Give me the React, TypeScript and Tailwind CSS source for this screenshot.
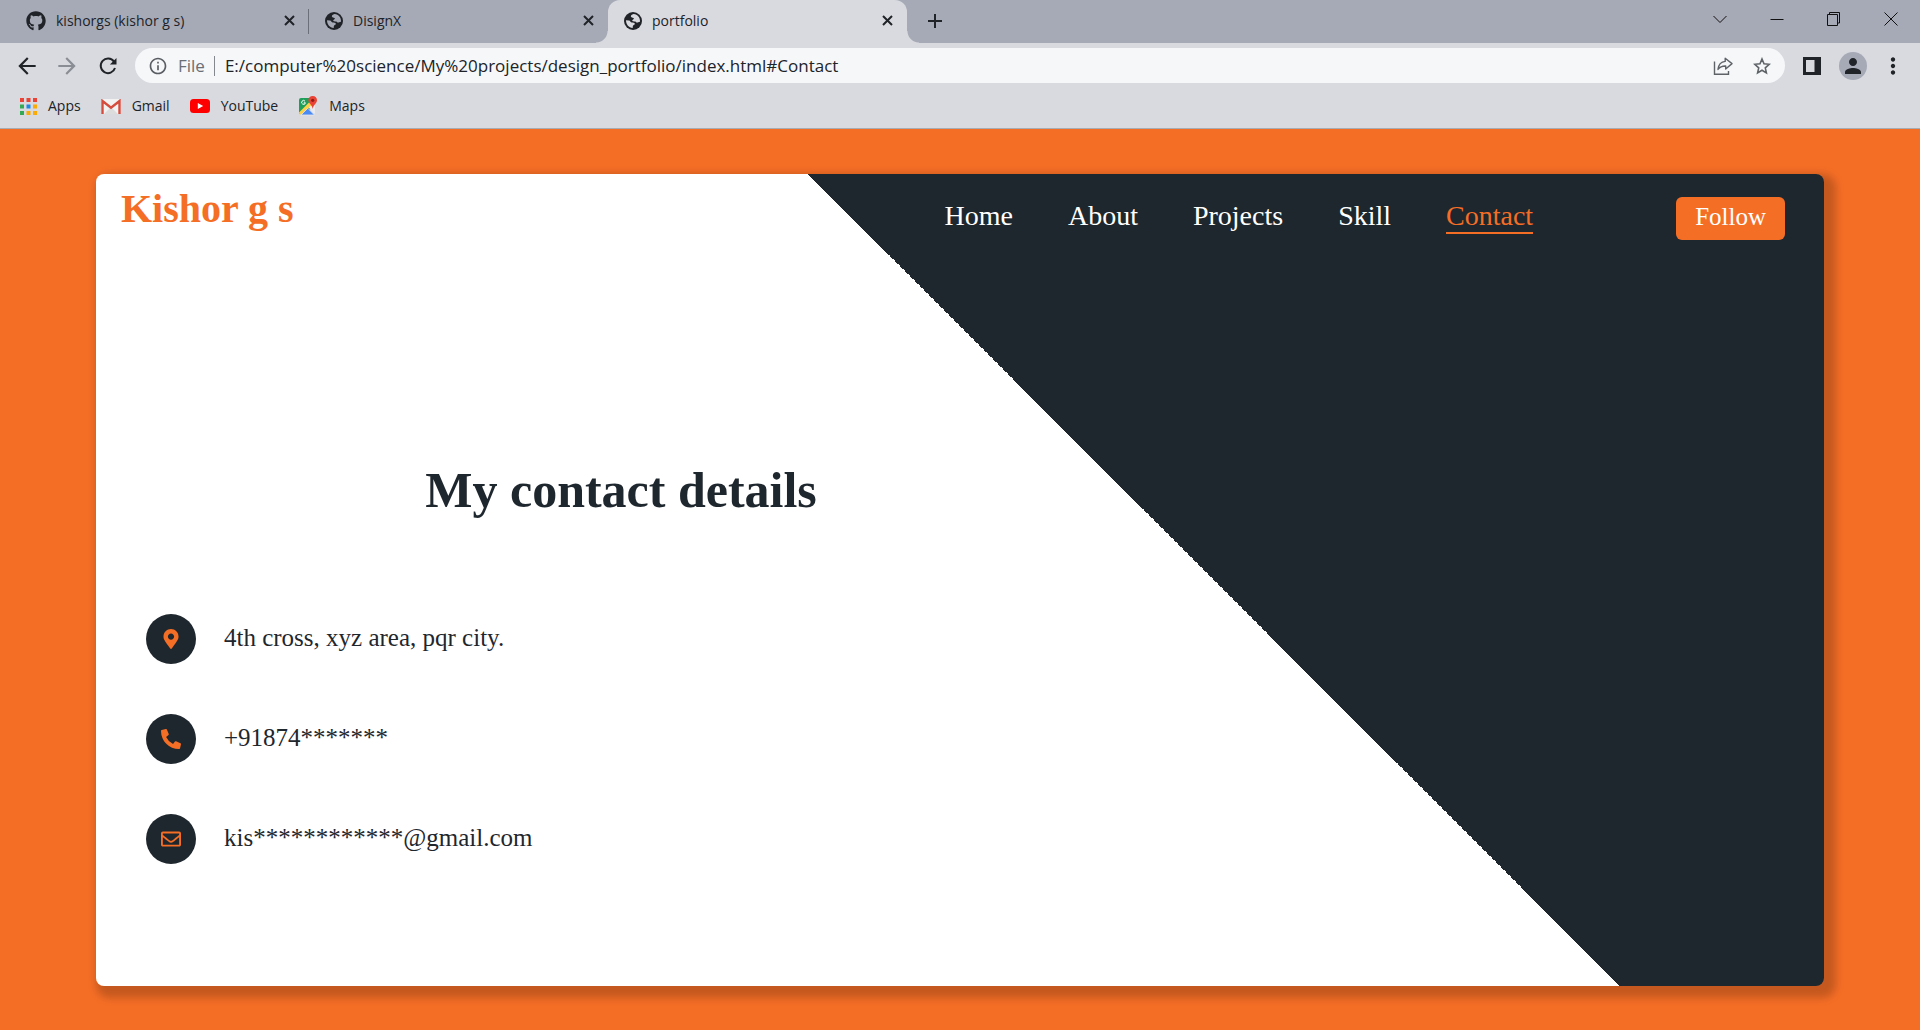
import React from "react";
import { FaGithub, FaMapMarkerAlt, FaPhoneAlt, FaRegEnvelope } from "react-icons/fa";
import {
  MdAdd,
  MdArrowBack,
  MdArrowForward,
  MdMoreVert,
  MdOutlineInfo,
  MdPerson,
} from "react-icons/md";

type TabProps = {
  title: string;
  icon: React.ReactNode;
  active?: boolean;
  divider?: boolean;
};

function Tab({ title, icon, active, divider }: TabProps) {
  return (
    <div
      className={
        active
          ? "relative flex w-[299px] items-center rounded-t-xl bg-[#d9dadf] pr-[14px] pb-[2px] pl-4"
          : "relative flex w-[299px] items-center pr-[14px] pb-[2px] pl-4"
      }
    >
      {active && (
        <>
          <span className="absolute bottom-0 -left-3 size-3 bg-[radial-gradient(circle_at_0_0,transparent_11px,#d9dadf_12px)]" />
          <span className="absolute -right-3 bottom-0 size-3 bg-[radial-gradient(circle_at_100%_0,transparent_11px,#d9dadf_12px)]" />
        </>
      )}
      <a href="#tab" className="flex grow items-center gap-[10px] text-sm text-[#202328]">
        {icon}
        {title}
      </a>
      <button aria-label={`Close ${title}`} className="text-[#202328]">
        <svg viewBox="0 0 11 11" className="size-[11px]" fill="none" stroke="currentColor" strokeWidth="2">
          <path d="m1 1 9 9m0-9-9 9" />
        </svg>
      </button>
      {divider && <span className="absolute top-[9px] right-0 h-[25px] w-px bg-[#6b6f78]" />}
    </div>
  );
}

function Globe({ land }: { land: string }) {
  return (
    <svg viewBox="0 0 18 18" className="size-[18px]">
      <circle cx="9" cy="9" r="9" fill="#202328" />
      <path
        d="M9.500 2C6.800 2.800 6.400 4 7.200 4.900c.8.900 2.600.4 2.700 1.500.1.900-1.600 1-1.700 2-.1 1.100 1.700.8 3 1 .9.200 1 1.200 1.900 1.200 1 0 1.200-.9 2.900-.9.300-3.900-2.200-7.700-6.500-7.700Z"
        fill={land}
      />
      <path
        d="M2 8.300c0 4.400 3 7.500 6.600 7.700.6-1.200-.2-1.800.6-2.600.6-.6 1.600-.5 1.600-1.700 0-1.400-2-1.100-3.200-1.300C6.200 10.200 6.400 8.500 5 8.400Z"
        fill={land}
      />
    </svg>
  );
}

function Reload() {
  return (
    <svg viewBox="0 0 18 18" className="ml-[5px] size-[18px]">
      <path d="M15 4.600A7.300 7.300 0 1 0 16 11" fill="none" stroke="currentColor" strokeWidth="2" />
      <path d="M17.500 1v6.600h-6.600Z" fill="currentColor" />
    </svg>
  );
}

function Share() {
  return (
    <svg viewBox="0 0 20 20" className="size-5" fill="none" stroke="currentColor" strokeWidth="1.4">
      <path d="M1.500 5.500v12.800h14v-3.400" />
      <path d="M12.200 2.200 19 7.600l-6.300 5.400V10C9 9.800 7 10.800 5 13.400 5.500 9 8 5.800 12.200 5.400Z" strokeLinejoin="round" />
    </svg>
  );
}

function Star() {
  return (
    <svg viewBox="0 0 18 18" className="size-[18px]" fill="none" stroke="currentColor" strokeWidth="1.6">
      <path d="m9 2 2 4.800 5.200.5-3.900 3.500 1.100 5.100L9 13.200l-4.400 2.700 1.100-5.100-3.900-3.500L7 6.800Z" />
    </svg>
  );
}

const appColours = [
  "#ea4335", "#ea4335", "#ea4335",
  "#34a853", "#1e88e5", "#fbab05",
  "#34a853", "#fbab05", "#fbab05",
];

function AppsIcon() {
  return (
    <svg viewBox="0 0 17 17" className="size-[17px]">
      {appColours.map((fill, i) => (
        <rect key={i} x={(i % 3) * 6.5} y={Math.floor(i / 3) * 6.5} width="4" height="4" fill={fill} />
      ))}
    </svg>
  );
}

function GmailIcon() {
  return (
    <svg viewBox="0 0 20 15" className="h-[15px] w-5">
      <rect width="20" height="15" rx="1.5" fill="#f2f2f2" />
      <path d="M3 15 10 8l7 7Z" fill="#dcdcdc" />
      <path d="M1.500 15V2L10 8.800 18.500 2v13" fill="none" stroke="#d54b3d" strokeWidth="2.4" />
    </svg>
  );
}

function YouTubeIcon() {
  return (
    <svg viewBox="0 0 20 14" className="h-[14px] w-5">
      <rect width="20" height="14" rx="3.5" fill="#f00" />
      <path d="m7.800 4 5.400 3-5.400 3Z" fill="#fff" />
    </svg>
  );
}

function MapsIcon() {
  return (
    <svg viewBox="0 0 20 20" className="size-5">
      <path d="M3 2h12v10L3 18H1V4q0-2 2-2Z" fill="#1e9e58" />
      <path d="m9.500 10 4-3 3.500 3v7l-1 1Z" fill="#e8eaed" />
      <path d="M1 16.500 12 5.500l2.500 2.500L4 18.500H2.500Q1 18.500 1 17Z" fill="#fdd04a" />
      <path d="m3 19 6.800-6.800 6.700 6.800Z" fill="#4a8af4" stroke="#e8eaed" strokeWidth="0.8" />
      <path d="M7 5.200a1.900 1.900 0 1 0 .4 1.600H5.800" fill="none" stroke="#fff" strokeWidth="1" />
      <path d="M14.700 0c-2.600 0-4.300 1.900-4.300 4.200 0 3.300 3.500 3.800 4.300 8.800.8-5 4.300-5.500 4.300-8.800C19 1.900 17.300 0 14.700 0Z" fill="#ea4335" />
      <circle cx="14.7" cy="4.3" r="1.6" fill="#8c1d14" />
    </svg>
  );
}

function WindowButtons() {
  const line = { fill: "none", stroke: "#111", strokeWidth: 1 };
  return (
    <div className="ml-auto flex h-[37px] items-center pr-px">
      <button aria-label="Search tabs" className="flex w-[57px] justify-center">
        <svg viewBox="0 0 14 14" className="size-[14px]" {...line}><path d="m.5 4 6.500 6.500L13.500 4" /></svg>
      </button>
      <button aria-label="Minimize" className="flex w-[57px] justify-center">
        <svg viewBox="0 0 14 14" className="size-[14px]" {...line}><path d="M.5 7.500h13" /></svg>
      </button>
      <button aria-label="Restore" className="flex w-[57px] justify-center">
        <svg viewBox="0 0 14 14" className="size-[14px]" {...line}><path d="M.5 2.500h10v11H.5ZM2.500 2V.5h10v10.500H11" /></svg>
      </button>
      <button aria-label="Close window" className="flex w-[57px] justify-center">
        <svg viewBox="0 0 14 14" className="size-[14px]" {...line}><path d="m.5.500 13 13m0-13-13 13" /></svg>
      </button>
    </div>
  );
}

const bookmarks = [
  { name: "Apps", icon: <AppsIcon /> },
  { name: "Gmail", icon: <GmailIcon /> },
  { name: "YouTube", icon: <YouTubeIcon /> },
  { name: "Maps", icon: <MapsIcon /> },
];

function BrowserBar() {
  return (
    <div className="border-b border-[#a9abb3] bg-[#d9dadf] font-['Open_Sans',sans-serif] text-[#202328]">
      <div className="flex h-[43px] bg-[#a6aab6] pl-[10px]">
        <Tab title="kishorgs (kishor g s)" icon={<FaGithub className="size-5" />} divider />
        <Tab title="DisignX" icon={<Globe land="#a6aab6" />} />
        <Tab title="portfolio" icon={<Globe land="#d9dadf" />} active />
        <button aria-label="New tab" className="ml-4 pb-[2px]">
          <MdAdd className="size-6" />
        </button>
        <WindowButtons />
      </div>

      <div className="flex h-[45px] items-center pr-[14px] pl-[14px]">
        <button aria-label="Back" className="w-10"><MdArrowBack className="size-[26px]" /></button>
        <button aria-label="Forward" className="w-10 text-[#8a8d94]"><MdArrowForward className="size-[26px]" /></button>
        <button aria-label="Reload" className="w-[41px]"><Reload /></button>
        <div className="flex h-[35px] grow items-center rounded-full bg-[#f5f7f9] pr-[14px] pl-[13px] text-[17px]">
          <MdOutlineInfo className="size-5 text-[#5a5d63]" />
          <span className="ml-[10px] text-[#6b6e74]">File</span>
          <span className="mr-[10px] ml-[9px] h-5 w-px bg-[#85888e]" />
          <input
            aria-label="Address"
            className="min-w-0 grow bg-transparent outline-none"
            defaultValue="E:/computer%20science/My%20projects/design_portfolio/index.html#Contact"
          />
          <button aria-label="Share" className="text-[#5f6368]"><Share /></button>
          <button aria-label="Bookmark" className="ml-5 text-[#5f6368]"><Star /></button>
        </div>
        <button aria-label="Side panel" className="ml-[18px]">
          <svg viewBox="0 0 18 18" className="size-[18px]"><path fillRule="evenodd" d="M0 0h18v18H0ZM3 3v12h8.500V3Z" fill="currentColor" /></svg>
        </button>
        <button aria-label="Profile" className="ml-[18px] flex size-7 items-center justify-center rounded-full bg-[#a6aab6]">
          <MdPerson className="size-6" />
        </button>
        <button aria-label="Menu" className="ml-[13px]"><MdMoreVert className="size-[26px]" /></button>
      </div>

      <div className="flex h-10 items-center gap-5 pb-[4px] pl-5 text-sm">
        {bookmarks.map((b) => (
          <a key={b.name} href="#bookmark" className="flex items-center gap-[11px]">
            {b.icon}
            {b.name}
          </a>
        ))}
      </div>
    </div>
  );
}

const navLinks = ["Home", "About", "Projects", "Skill", "Contact"];

const contacts = [
  { icon: FaMapMarkerAlt, text: "4th cross, xyz area, pqr city." },
  { icon: FaPhoneAlt, text: "+91874*******" },
  { icon: FaRegEnvelope, text: "kis************@gmail.com" },
];

export default function App() {
  return (
    <div className="flex min-h-screen flex-col bg-[#f56e26]">
      <BrowserBar />
      <main className="flex grow flex-col px-[5%] pt-[45px] pb-11 font-['Liberation_Serif',serif]">
        <section className="grow rounded-lg bg-[linear-gradient(45deg,#ffffff_60%,#1f272e_60%)] pb-[100px] shadow-[6px_6px_8px_6px_rgba(0,0,0,0.2)]">
          <header className="flex justify-between pt-[14px] pr-[39px] pl-[25px]">
            <h1 className="text-[40px] leading-[42px] font-bold text-[#f56e26]">Kishor g s</h1>
            <div className="flex items-start">
              <nav className="mr-[143px] flex gap-[55px] pt-[12px] text-[28px] leading-[32px] text-white">
                {navLinks.map((name) => (
                  <a
                    key={name}
                    href={`#${name}`}
                    className={name === "Contact" ? "border-b-2 border-[#f56e26] text-[#f56e26]" : ""}
                  >
                    {name}
                  </a>
                ))}
              </nav>
              <button className="mt-[9px] h-[43px] rounded-md bg-[#f56e26] px-[19px] pb-1 text-[25px] leading-[39px] text-white">
                Follow
              </button>
            </div>
          </header>
          <div className="w-[61%] pt-[220px] pr-1">
            <h2 className="text-center text-[50px] leading-[60px] font-bold text-[#1f272e]">My contact details</h2>
          </div>
          <ul className="mt-[94px] flex flex-col gap-[50px] pl-[50px]">
            {contacts.map(({ icon: Icon, text }) => (
              <li key={text} className="flex items-center gap-7 text-[25px] text-[#1f272e]">
                <span className="flex size-[50px] items-center justify-center rounded-full bg-[#1f272e] text-[#f56e26]">
                  <Icon className="size-5" />
                </span>
                <span className="pb-[2px]">{text}</span>
              </li>
            ))}
          </ul>
        </section>
      </main>
    </div>
  );
}
